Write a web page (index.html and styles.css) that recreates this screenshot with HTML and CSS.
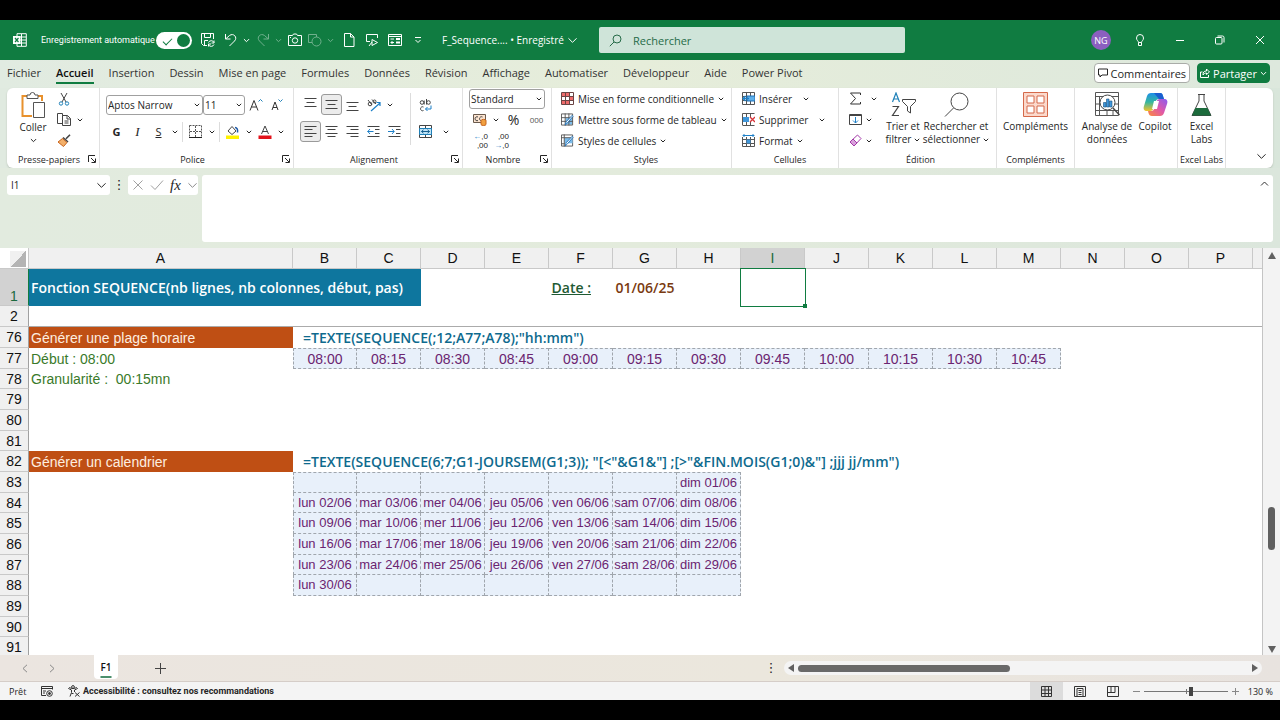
FILE: index.html
```
<!DOCTYPE html>
<html lang="fr">
<head>
  <meta charset="utf-8">
  <title>F_Sequence - Excel</title>
  <link rel="stylesheet" href="styles.css">
</head>
<body>
  <!-- Shared icons -->
  <svg class="defs" width="0" height="0">
    <symbol id="chev" viewBox="0 0 6 6"><path d="M.8 1.8 3 4l2.2-2.2" fill="none" stroke="currentColor" vector-effect="non-scaling-stroke"/></symbol>
    <symbol id="launch" viewBox="0 0 8 8"><path d="M.5 7V.5H7M3 3l4 4M7.500 3.500v4h-4" fill="none" stroke="currentColor"/></symbol>
  </svg>

  <header class="titlebar">
    <div class="quick-access">
      <svg class="logo" width="14" height="14" viewBox="0 0 14 14" fill="none" stroke="#fff"><path d="M4 3V.7h9.300v12.600H4V11M8.500 1v12M7 4h6M7 7h6M7 10h6"/><path d="M0 3h7.500v8H0z" fill="#fff" stroke="none"/><path d="m2 5 3.500 4M5.500 5 2 9" stroke="#107c41" stroke-width="1.200"/></svg>
      <label class="autosave" for="autosave">Enregistrement automatique</label>
      <input type="checkbox" id="autosave" class="toggle" checked>
      <button class="tool save" aria-label="Enregistrer"><svg width="14" height="14" viewBox="0 0 14 14"><path d="M6 12.500H2.500l-2-2V.5h12V6M3.500.5v4h6v-4M3.500 12V7.500H7M13 7.500v2.500h-2.500M7.500 13.500V11H10M7.500 9.500a3 3 0 0 1 5.500 0M13 11.500a3 3 0 0 1-5.300.5"/></svg></button>
      <button class="tool undo" aria-label="Annuler"><svg width="14" height="14" viewBox="0 0 14 14"><path d="M1.500 1v5h5M1.800 5.800 5.500 2.500c4-3 8.500 2 5 5.500L5.500 13"/></svg></button>
      <button class="drop" aria-label="Liste annuler"><svg width="7" height="7"><use href="#chev"/></svg></button>
      <button class="tool dim redo" aria-label="Rétablir"><svg width="14" height="14" viewBox="0 0 14 14"><path d="M12.500 1v5h-5M12.200 5.800 8.500 2.500c-4-3-8.500 2-5 5.500L8.500 13"/></svg></button>
      <button class="drop dim" aria-label="Liste rétablir"><svg width="7" height="7"><use href="#chev"/></svg></button>
      <button class="tool camera" aria-label="Appareil photo"><svg width="14" height="14" viewBox="0 0 14 14"><path d="M.5 2.500h4l1-1.500h3l1 1.500h4v10H.5z"/><circle cx="7" cy="7.500" r="2.700"/><path d="M2 4.500h1"/></svg></button>
      <button class="tool dim shapes" aria-label="Formes"><svg width="14" height="14" viewBox="0 0 14 14"><path d="M4 9.500H.5v-8h8V4"/><circle cx="8.500" cy="8.500" r="4.500"/></svg></button>
      <button class="drop dim" aria-label="Liste formes"><svg width="7" height="7"><use href="#chev"/></svg></button>
      <button class="tool doc" aria-label="Nouveau"><svg width="14" height="14" viewBox="0 0 14 14"><path d="M2.500.5h6l3.500 3.500v9.500H2.500zM8.500.5V4H12"/></svg></button>
      <button class="tool present" aria-label="Présenter"><svg width="14" height="14" viewBox="0 0 14 14"><path d="M5 8.500H1.500v-7h11V5M4 13l3-4M7 6.500v6l5.500-3z"/></svg></button>
      <button class="tool form" aria-label="Formulaire"><svg width="14" height="14" viewBox="0 0 14 14"><path d="M.5 1.500h13v11H.5zM.5 3.500h13M2.500 6h3.500M2.500 9.500h3.500M8 6h4M8 9.500h4" /><path d="M8 6h4M8 9.500h4M3 9.500h2" stroke-width="2"/></svg></button>
      <button class="drop more" aria-label="Personnaliser"><svg width="8" height="8" viewBox="0 0 8 8" fill="none" stroke="currentColor"><path d="M1 1.500h6M1.500 4 4 6.500 6.500 4"/></svg></button>
      <button class="filename">F_Sequence.... • Enregistré <svg width="11" height="11"><use href="#chev"/></svg></button>
    </div>
    <div class="search">
      <svg width="13" height="13" viewBox="0 0 13 13" fill="none" stroke="#266b48"><circle cx="8" cy="5" r="4"/><path d="M5 8 .8 12.200"/></svg>
      <input type="search" aria-label="Rechercher" placeholder="Rechercher">
    </div>
    <div class="window-tools">
      <button class="avatar">NG</button>
      <button class="win" aria-label="Conseils"><svg width="12" height="12" viewBox="0 0 12 12"><path d="M4.500 8.500C4.500 7 2.500 6.500 2.500 4a3.500 3.500 0 0 1 7 0c0 2.500-2 3-2 4.500zM4.500 8.500v3h3v-3"/></svg></button>
      <button class="win" aria-label="Réduire"><svg width="10" height="10" viewBox="0 0 10 10"><path d="M1 5.500h8"/></svg></button>
      <button class="win" aria-label="Restaurer"><svg width="10" height="10" viewBox="0 0 10 10"><rect x=".5" y="2.500" width="6.500" height="6.500" rx="1"/><path d="M2.500 1h5a1.500 1.500 0 0 1 1.500 1.500v5"/></svg></button>
      <button class="win" aria-label="Fermer"><svg width="10" height="10" viewBox="0 0 10 10"><path d="m1 1 8 8M9 1 1 9"/></svg></button>
    </div>
  </header>

  <nav class="menu">
    <a href="#">Fichier</a>
    <a href="#" class="active">Accueil</a>
    <a href="#">Insertion</a>
    <a href="#">Dessin</a>
    <a href="#">Mise en page</a>
    <a href="#">Formules</a>
    <a href="#">Données</a>
    <a href="#">Révision</a>
    <a href="#">Affichage</a>
    <a href="#">Automatiser</a>
    <a href="#">Développeur</a>
    <a href="#">Aide</a>
    <a href="#">Power Pivot</a>
    <div class="menu-actions">
      <button class="comments"><svg width="10" height="10" viewBox="0 0 10 10" fill="none" stroke="currentColor"><path d="M.5 1h9v6H4L2 9V7H.5z"/></svg>Commentaires</button>
      <button class="share"><svg width="10" height="10" viewBox="0 0 10 10" fill="none" stroke="currentColor"><path d="M2.500 4H.5v5.500h8V7M3 7c0-3 1-4 3.500-4V1l3 3-3 2.500V5C5 5 4 5.500 3 7z"/></svg>Partager<svg width="7" height="7"><use href="#chev"/></svg></button>
    </div>
  </nav>

  <div class="ribbon-area">
  <section class="ribbon">
    <div class="group g-clipboard">
      <div class="group-body">
        <button class="big paste"><svg width="24" height="26" viewBox="0 0 24 26" fill="none"><path d="M6 4H1.500v20H11M17 4h4v5" stroke="#e8912d" stroke-width="2"/><path d="M6 6.500V3h3a2.500 2.500 0 0 1 5 0h3v3.500z" fill="#fff" stroke="#555"/><path d="M12.500 10.500h11v15h-11z" fill="#fff" stroke="#555"/></svg>Coller<svg width="7" height="7"><use href="#chev"/></svg></button>
        <div class="stack">
          <div class="row"><button class="ico" aria-label="Couper"><svg width="12" height="14" viewBox="0 0 12 14" fill="none"><path d="m3 1 5 9M9 1 4 10" stroke="#444"/><circle cx="3" cy="11.500" r="1.700" stroke="#1e80b8"/><circle cx="9" cy="11.500" r="1.700" stroke="#1e80b8"/></svg></button></div>
          <div class="row"><button class="ico" aria-label="Copier"><svg width="14" height="13" viewBox="0 0 14 13" fill="#fff" stroke="#444"><path d="M.5.5h5v10h-5z"/><path d="M5.500 2.500h5l3 3v7h-8zM10 2.500v3.500h3.500M7.500 8h4M7.500 10h4"/></svg></button><button class="chev-btn" aria-label="Options copier"><svg width="6" height="6"><use href="#chev"/></svg></button></div>
          <div class="row"><button class="ico" aria-label="Reproduire la mise en forme"><svg width="14" height="13" viewBox="0 0 14 13"><path d="m13 .8-4 4M6 3.500l5 4.500" fill="none" stroke="#444" stroke-width="1.600"/><path d="M5.500 4.500 10 8.500 6.500 12.500 1 8z" fill="#f3b06a" stroke="#c8641c"/></svg></button></div>
        </div>
      </div>
      <div class="group-foot"><span>Presse-papiers</span><button class="launcher" aria-label="Options presse-papiers"><svg width="8" height="8"><use href="#launch"/></svg></button></div>
    </div>

    <div class="group g-font">
      <div class="group-body two-rows">
        <div class="row">
          <div class="combo font-name"><select aria-label="Police"><option>Aptos Narrow</option></select><svg width="6" height="6"><use href="#chev"/></svg></div>
          <div class="combo font-size"><select aria-label="Taille"><option>11</option></select><svg width="6" height="6"><use href="#chev"/></svg></div>
          <button class="ico" aria-label="Agrandir"><svg width="14" height="14" viewBox="0 0 14 14" fill="none"><path d="m1 12.500 4-10 4 10M2.500 9h5" stroke="#333"/><path d="m9.500 3.500 2-2 2 2" stroke="#1e80b8"/></svg></button>
          <button class="ico" aria-label="Réduire la police"><svg width="14" height="14" viewBox="0 0 14 14" fill="none"><path d="m2 12 3-8 3 8M3 9.500h4" stroke="#333"/><path d="m8.500 1.500 2 2 2-2" stroke="#1e80b8"/></svg></button>
        </div>
        <div class="row">
          <button class="ico bold">G</button><button class="ico italic">I</button><button class="ico underline">S</button><button class="chev-btn" aria-label="Soulignement"><svg width="6" height="6"><use href="#chev"/></svg></button>
          <span class="sep"></span>
          <button class="ico" aria-label="Bordures"><svg width="13" height="13" viewBox="0 0 13 13" fill="none" stroke="#555"><path d="M.5 .5h12v12M.5.5v12M6.500 1v11M1 6.500h11" stroke-dasharray="2 1"/><path d="M0 12.500h13" stroke="#222"/></svg></button><button class="chev-btn" aria-label="Options bordures"><svg width="6" height="6"><use href="#chev"/></svg></button>
          <span class="sep"></span>
          <button class="ico" aria-label="Remplissage"><svg width="14" height="14" viewBox="0 0 14 14"><path d="m6 1.500 4 4.500-4 3.500L2 6z" fill="#fff" stroke="#444"/><path d="M9 2.500c2 0 3 2 2.500 5" fill="none" stroke="#1e5aa8" stroke-width="1.500"/><path d="M0 10.500h13V14H0z" fill="#fff200"/></svg></button><button class="chev-btn" aria-label="Couleurs de remplissage"><svg width="6" height="6"><use href="#chev"/></svg></button>
          <button class="ico" aria-label="Couleur de police"><svg width="14" height="14" viewBox="0 0 14 14"><path d="m3.500 9 3.500-8 3.500 8M4.500 6.500h5" fill="none" stroke="#444"/><path d="M.5 10.500h13V14H.5z" fill="#e3131b"/></svg></button><button class="chev-btn" aria-label="Couleurs de police"><svg width="6" height="6"><use href="#chev"/></svg></button>
        </div>
      </div>
      <div class="group-foot"><span>Police</span><button class="launcher" aria-label="Options police"><svg width="8" height="8"><use href="#launch"/></svg></button></div>
    </div>

    <div class="group g-align">
      <div class="group-body">
        <div class="two-rows align-main">
          <div class="row">
            <button class="ico" aria-label="Haut"><svg width="13" height="13" viewBox="0 0 13 13" stroke="#444"><path d="M.5 .5h12M2.500 4.500h8M.5 8.500h12"/></svg></button>
            <button class="ico on" aria-label="Centré"><svg width="13" height="13" viewBox="0 0 13 13" stroke="#444"><path d="M.5 2.500h12M2.500 6.500h8M.5 10.500h12"/></svg></button>
            <button class="ico" aria-label="Bas"><svg width="13" height="13" viewBox="0 0 13 13" stroke="#444"><path d="M.5 4.500h12M2.500 8.500h8M.5 12.500h12"/></svg></button>
            <button class="ico" aria-label="Orientation"><svg width="14" height="14" viewBox="0 0 14 14" fill="none"><circle cx="3" cy="6" r="1.800" stroke="#444"/><path d="m1 2 4 5M5 1.500l4 4.500" stroke="#444"/><circle cx="7.500" cy="3.500" r="1.500" stroke="#444"/><path d="m4 13 9-8M9.500 4.500H13V8" stroke="#1e80c8" stroke-width="1.200"/></svg></button>
            <button class="chev-btn" aria-label="Options orientation"><svg width="6" height="6"><use href="#chev"/></svg></button>
          </div>
          <div class="row">
            <button class="ico on" aria-label="Gauche"><svg width="13" height="13" viewBox="0 0 13 13" stroke="#444"><path d="M.5 1.500h12M.5 4.500h8M.5 8.500h12M.5 11.500h8"/></svg></button>
            <button class="ico" aria-label="Centrer"><svg width="13" height="13" viewBox="0 0 13 13" stroke="#444"><path d="M.5 1.500h12M2.500 4.500h8M.5 8.500h12M2.500 11.500h8"/></svg></button>
            <button class="ico" aria-label="Droite"><svg width="13" height="13" viewBox="0 0 13 13" stroke="#444"><path d="M.5 1.500h12M4.500 4.500h8M.5 8.500h12M4.500 11.500h8"/></svg></button>
            <button class="ico" aria-label="Diminuer le retrait"><svg width="13" height="13" viewBox="0 0 13 13" fill="none" stroke="#444"><path d="M.5 1.500h12M8 4.500h4.500M8 8.500h4.500M.5 11.500h12"/><path d="M6.500 6.500h-6M3 4 .8 6.500 3 9" stroke="#1e80c8"/></svg></button>
            <button class="ico" aria-label="Augmenter le retrait"><svg width="13" height="13" viewBox="0 0 13 13" fill="none" stroke="#444"><path d="M.5 1.500h12M8 4.500h4.500M8 8.500h4.500M.5 11.500h12"/><path d="M0 6.500h6M4 4l2.200 2.500L4 9" stroke="#1e80c8"/></svg></button>
          </div>
        </div>
        <span class="sep tall"></span>
        <div class="two-rows">
          <div class="row"><button class="ico wrap" aria-label="Renvoyer à la ligne"><svg width="13" height="14" viewBox="0 0 13 14" fill="none" stroke="#444"><circle cx="3" cy="4.500" r="1.800"/><path d="M5.200 2.500V6.500M7.500 1v5.500M4.500 9a2 2 0 1 0 0 3.500"/><circle cx="9.500" cy="4.500" r="1.800"/><path d="M12 7.500V11H6.500M8.500 9l-2 2 2 2" stroke="#1e80c8"/></svg></button></div>
          <div class="row"><button class="ico" aria-label="Fusionner"><svg width="13" height="13" viewBox="0 0 13 13" fill="none"><path d="M.5.5h12v12H.5zM6.500 0v3M6.500 10v3" stroke="#444"/><path d="M.5 3.500h12v6H.5z" fill="#bfe2f5" stroke="#1e80b8"/><path d="M2.500 6.500h8M4.500 4.800l-2 1.700 2 1.700M8.500 4.800l2 1.700-2 1.700" stroke="#17608f"/></svg></button><button class="chev-btn merge-drop" aria-label="Options fusion"><svg width="6" height="6"><use href="#chev"/></svg></button></div>
        </div>
      </div>
      <div class="group-foot"><span>Alignement</span><button class="launcher" aria-label="Options alignement"><svg width="8" height="8"><use href="#launch"/></svg></button></div>
    </div>

    <div class="group g-number">
      <div class="group-body stack">
        <div class="row"><div class="combo number-format"><select aria-label="Format de nombre"><option>Standard</option></select><svg width="6" height="6"><use href="#chev"/></svg></div></div>
        <div class="row"><button class="ico" aria-label="Monétaire"><svg width="14" height="12" viewBox="0 0 14 12" fill="none"><path d="M.5.5h12v8H.5z" fill="#fbe3cf" stroke="#6b5a4d"/><path d="M5 3a2 2 0 1 0 0 3.500M9.500 3a2 2 0 1 0 0 3.500" stroke="#444"/><path d="M8 6.500c0-1.500 5-1.500 5 0v4c0 1.300-5 1.300-5 0z" fill="#f0a040" stroke="#c8641c"/></svg></button><button class="chev-btn" aria-label="Options monétaire"><svg width="6" height="6"><use href="#chev"/></svg></button><button class="ico percent">%</button><button class="ico thousands">000</button></div>
        <div class="row"><button class="ico decimals"><span class="less">,0</span><span>,00</span></button><button class="ico decimals"><span>,00</span><span class="more-dec">,0</span></button></div>
      </div>
      <div class="group-foot"><span>Nombre</span><button class="launcher" aria-label="Options nombre"><svg width="8" height="8"><use href="#launch"/></svg></button></div>
    </div>

    <div class="group g-styles">
      <div class="group-body stack">
        <button class="cmd"><svg width="13" height="13" viewBox="0 0 13 13"><path d="M.5.5h12v12H.5z" fill="#fff"/><path d="M1 1h4v3H1zM1 8h7v4H1zM8 4h4v5H8zM5 1h4v3H5z" fill="#ee6b6b"/><path d="M.5.5h12v12H.5zM4.500 0v13M8.500 0v13M0 4.500h13M0 8.500h13" fill="none" stroke="#6a4444"/></svg>Mise en forme conditionnelle<svg width="6" height="6"><use href="#chev"/></svg></button>
        <button class="cmd"><svg width="13" height="13" viewBox="0 0 14 13"><path d="M.5.5h12v12H.5z" fill="#fff"/><path d="M5 5h7v7H5z" fill="#7dbdec"/><path d="M.5.5h12v12H.5zM4.500 0v13M8.500 0v13M0 4.500h13M0 8.500h13" fill="none" stroke="#555"/><path d="M13 3 7 10l-2.500 2.500 1-3.500L12 2z" fill="#fff" stroke="#1e70b8"/></svg>Mettre sous forme de tableau<svg width="6" height="6"><use href="#chev"/></svg></button>
        <button class="cmd"><svg width="13" height="13" viewBox="0 0 14 13"><path d="M.5.5h12v12H.5z" fill="#fff" stroke="#555"/><path d="M3.500 3.500h9v6h-9z" fill="#7dbdec"/><path d="M3.500 0v13M0 3.500h13M0 10h4" fill="none" stroke="#555"/><path d="M13 3 7 10l-2.500 2.500 1-3.500L12 2z" fill="#fff" stroke="#1e70b8"/></svg>Styles de cellules<svg width="6" height="6"><use href="#chev"/></svg></button>
      </div>
      <div class="group-foot"><span>Styles</span></div>
    </div>

    <div class="group g-cells">
      <div class="group-body stack">
        <button class="cmd"><svg width="13" height="13" viewBox="0 0 13 13" fill="none"><path d="M.5.5h12v12H.5zM4.500 0v13M8.500 0v13M0 4.500h13M0 8.500h13" stroke="#555"/><path d="M5 4h8v5H5z" fill="#5fb0ea" stroke="#1e70b8"/><path d="M7 6.500H.8M3.500 4 1 6.500 3.500 9" stroke="#1e80c8" stroke-width="1.300"/></svg>Insérer<svg class="far" width="6" height="6"><use href="#chev"/></svg></button>
        <button class="cmd"><svg width="13" height="13" viewBox="0 0 13 13" fill="none"><path d="M.5 12V.5h12M.5 12.500h12M4.500 0v4M8.500 0v4M4.500 9v4M8.500 9v4" stroke="#555"/><path d="M1 4h6v5H1z" fill="#3f97db"/><path d="m8 4 5 5M13 4 8 9" stroke="#d8353a" stroke-width="1.300"/></svg>Supprimer<svg class="far" width="6" height="6"><use href="#chev"/></svg></button>
        <button class="cmd"><svg width="13" height="13" viewBox="0 0 13 13" fill="none"><path d="M.5 3v9.500h12V3M4.500 3v10M8.500 3v10M0 5.500h13M0 9.500h13" stroke="#555"/><path d="M4.500 5.500h4v4h-4z" fill="#3f97db"/><path d="M1 1.500h11M2.500 0 1 1.500 2.500 3M10.500 0 12 1.500 10.500 3" stroke="#1e80c8"/></svg>Format<svg width="6" height="6"><use href="#chev"/></svg></button>
      </div>
      <div class="group-foot"><span>Cellules</span></div>
    </div>

    <div class="group g-edit">
      <div class="group-body">
        <div class="stack">
          <button class="cmd sum" aria-label="Somme"><svg width="13" height="13" viewBox="0 0 13 13" fill="none" stroke="#333"><path d="M11.500 3V1h-10l5 5.500-5 5.500h10v-2"/></svg><svg width="6" height="6"><use href="#chev"/></svg></button>
          <button class="cmd" aria-label="Recopier"><svg width="13" height="13" viewBox="0 0 13 13" fill="none"><path d="M.5 1.500h12v10H.5z" stroke="#444"/><path d="M.5 2.500h12" stroke="#444"/><path d="M6.500 4v6M4 7.500 6.500 10 9 7.500" stroke="#1e80c8"/></svg><svg width="6" height="6"><use href="#chev"/></svg></button>
          <button class="cmd" aria-label="Effacer"><svg width="13" height="13" viewBox="0 0 13 13"><path d="M8.500 1 12 4.500 5 12 1 8z" fill="#fff" stroke="#a33aa8"/><path d="m4 5-3 3 4 4 3-3z" fill="#d9a0dc" stroke="#a33aa8"/></svg><svg width="6" height="6"><use href="#chev"/></svg></button>
        </div>
        <button class="big sort"><svg width="25" height="25" viewBox="0 0 25 25" fill="none"><path d="m1.500 10 3.500-9 3.500 9M2.700 7h4.600" stroke="#1e80b8" stroke-width="1.200"/><path d="M1.500 14.500h6l-6 9h6.500" stroke="#444" stroke-width="1.200"/><path d="M11.500 7.500h13v2l-5 5v6.500l-3-2v-4.500l-5-5z" stroke="#444"/></svg>Trier et<span>filtrer <svg width="6" height="6"><use href="#chev"/></svg></span></button>
        <button class="big find"><svg width="25" height="25" viewBox="0 0 25 25" fill="none" stroke="#444"><circle cx="15.500" cy="9.500" r="8.500"/><path d="M9.500 16 1 24.500"/></svg>Rechercher et<span>sélectionner <svg width="6" height="6"><use href="#chev"/></svg></span></button>
      </div>
      <div class="group-foot"><span>Édition</span></div>
    </div>

    <div class="group g-addins">
      <div class="group-body">
        <button class="big"><svg width="25" height="25" viewBox="0 0 25 25"><path d="M.5.5h24v24H.5z" fill="#fbd9cc" stroke="#d4694a"/><path d="M4 4h7v7H4zM14 4h7v7h-7zM4 14h7v7H4zM14 14h7v7h-7z" fill="#fff" stroke="#d4694a"/></svg>Compléments</button>
      </div>
      <div class="group-foot"><span>Compléments</span></div>
    </div>

    <div class="group g-analysis">
      <div class="group-body">
        <button class="big analyse"><svg width="25" height="25" viewBox="0 0 25 25" fill="none"><path d="M.5.5h23v23H.5zM.5 4.500h23M.5 12h23M.5 18.500h23M4.500 4v20M12 18v6M18 18v6" stroke="#555"/><circle cx="12.500" cy="10.500" r="7.500" fill="#fff" stroke="#444"/><path d="M8.500 10.500h2.500v4.500H8.500zM11.500 7h2.500v8h-2.500zM14.500 9H17v6h-2.500z" fill="#3f97db" stroke="#17507f" stroke-width=".6"/><path d="m18 16 6.500 7" stroke="#444" stroke-width="1.500"/></svg>Analyse de<span>données</span></button>
        <button class="big copilot"><svg width="25" height="25" viewBox="0 0 25 25"><defs><linearGradient id="cp1" x1="0" y1="0" x2="0" y2="1"><stop offset="0" stop-color="#1f8fe8"/><stop offset=".5" stop-color="#35b6a0"/><stop offset="1" stop-color="#f4c22b"/></linearGradient><linearGradient id="cp2" x1="1" y1="0" x2="0" y2="1"><stop offset="0" stop-color="#8a5cf0"/><stop offset=".5" stop-color="#e058a8"/><stop offset="1" stop-color="#fb8a3c"/></linearGradient></defs><path d="M8 1h9c2 0 2.500 1 3 3l1 3h-5c-2 0-3 1-3.500 3l-2 6c-.5 2-1.500 3-3.500 3H4c-3 0-4-2-3-5L4 4c.7-2 2-3 4-3z" fill="url(#cp1)"/><path d="M17 24H9c-2 0-3-1-3.500-3L5 19h3c2 0 3-1 3.500-3l2-6c.5-2 1.500-3 3.500-3h4c3 0 4 2 3 5l-3 9c-.7 2-2 3-4 3z" fill="url(#cp2)"/><path d="M11 9h5l-2 8H9z" fill="#fff"/><path d="M11 1h6c2 0 2.500 1 3 3l1 3h-5z" fill="#1b5fd0"/></svg>Copilot</button>
      </div>
      <div class="group-foot"></div>
    </div>

    <div class="group g-labs">
      <div class="group-body">
        <button class="big"><svg width="21" height="25" viewBox="0 0 21 25"><path d="M7 2.500h7M8 3v6L1 23.500h19L13 9V3" fill="#fff" stroke="#444"/><path d="M4.500 16h12l3.500 7.500H1z" fill="#1c6b3c"/></svg>Excel<span>Labs</span></button>
      </div>
      <div class="group-foot"><span>Excel Labs</span></div>
    </div>
    <button class="collapse" aria-label="Réduire le ruban"><svg width="11" height="11"><use href="#chev"/></svg></button>
  </section>
  </div>

  <section class="formula-bar">
    <div class="combo name-box"><input type="text" aria-label="Zone de nom" value="I1"><svg width="11" height="11"><use href="#chev"/></svg></div>
    <span class="dots">⋮</span>
    <div class="fx-box">
      <button aria-label="Annuler la saisie"><svg width="12" height="12" viewBox="0 0 12 12" fill="none" stroke="#a0a0a0"><path d="m1.500 1.500 9 9M10.500 1.500l-9 9"/></svg></button>
      <button aria-label="Valider"><svg width="14" height="12" viewBox="0 0 14 12" fill="none" stroke="#a0a0a0"><path d="M1 6.500 5 10.500 13 1.500"/></svg></button>
      <button class="fx">fx</button>
      <button class="muted" aria-label="Fonctions"><svg width="11" height="11"><use href="#chev"/></svg></button>
    </div>
    <div class="formula-input">
      <textarea aria-label="Barre de formule"></textarea>
      <svg width="9" height="9" viewBox="0 0 9 9" fill="none" stroke="#333"><path d="M1 6.500 4.500 3 8 6.500"/></svg>
    </div>
  </section>

  <main class="sheet">
    <div class="grid-view">
      <table class="grid">
        <colgroup><col class="col-num"><col class="col-a"><col span="16" class="col-std"></colgroup>
        <thead>
          <tr><th class="corner"></th><th>A</th><th>B</th><th>C</th><th>D</th><th>E</th><th>F</th><th>G</th><th>H</th><th class="selected">I</th><th>J</th><th>K</th><th>L</th><th>M</th><th>N</th><th>O</th><th>P</th><th></th></tr>
        </thead>
        <tbody class="frozen">
          <tr class="title-row"><th class="selected">1</th><td colspan="3" class="title">Fonction SEQUENCE(nb lignes, nb colonnes, début, pas)</td><td colspan="2"></td><td class="date-label">Date :</td><td class="date">01/06/25</td><td></td><td class="current"><span class="cursor"></span></td><td colspan="8"></td></tr>
          <tr><th>2</th><td colspan="17"></td></tr>
        </tbody>
        <tbody class="scrolled">
          <tr><th>76</th><td class="section">Générer une plage horaire</td><td colspan="16" class="formula">=TEXTE(SEQUENCE(;12;A77;A78);"hh:mm")</td></tr>
          <tr class="range first"><th>77</th><td class="param">Début : 08:00</td><td>08:00</td><td>08:15</td><td>08:30</td><td>08:45</td><td>09:00</td><td>09:15</td><td>09:30</td><td>09:45</td><td>10:00</td><td>10:15</td><td>10:30</td><td>10:45</td><td colspan="4" class="blank"></td></tr>
          <tr><th>78</th><td class="param">Granularité :&nbsp; 00:15mn</td><td colspan="16"></td></tr>
          <tr><th>79</th><td colspan="17"></td></tr>
          <tr><th>80</th><td colspan="17"></td></tr>
          <tr><th>81</th><td colspan="17"></td></tr>
          <tr><th>82</th><td class="section">Générer un calendrier</td><td colspan="16" class="formula">=TEXTE(SEQUENCE(6;7;G1-JOURSEM(G1;3)); "[&lt;"&amp;G1&amp;"] ;[&gt;"&amp;FIN.MOIS(G1;0)&amp;"] ;jjj jj/mm")</td></tr>
          <tr class="range days first"><th>83</th><td class="blank"></td><td></td><td></td><td></td><td></td><td></td><td></td><td>dim 01/06</td><td colspan="9" class="blank"></td></tr>
          <tr class="range days"><th>84</th><td class="blank"></td><td>lun 02/06</td><td>mar 03/06</td><td>mer 04/06</td><td>jeu 05/06</td><td>ven 06/06</td><td>sam 07/06</td><td>dim 08/06</td><td colspan="9" class="blank"></td></tr>
          <tr class="range days"><th>85</th><td class="blank"></td><td>lun 09/06</td><td>mar 10/06</td><td>mer 11/06</td><td>jeu 12/06</td><td>ven 13/06</td><td>sam 14/06</td><td>dim 15/06</td><td colspan="9" class="blank"></td></tr>
          <tr class="range days"><th>86</th><td class="blank"></td><td>lun 16/06</td><td>mar 17/06</td><td>mer 18/06</td><td>jeu 19/06</td><td>ven 20/06</td><td>sam 21/06</td><td>dim 22/06</td><td colspan="9" class="blank"></td></tr>
          <tr class="range days"><th>87</th><td class="blank"></td><td>lun 23/06</td><td>mar 24/06</td><td>mer 25/06</td><td>jeu 26/06</td><td>ven 27/06</td><td>sam 28/06</td><td>dim 29/06</td><td colspan="9" class="blank"></td></tr>
          <tr class="range days"><th>88</th><td class="blank"></td><td>lun 30/06</td><td></td><td></td><td></td><td></td><td></td><td></td><td colspan="9" class="blank"></td></tr>
          <tr><th>89</th><td colspan="17"></td></tr>
          <tr><th>90</th><td colspan="17"></td></tr>
          <tr><th>91</th><td colspan="17"></td></tr>
        </tbody>
      </table>
    </div>
    <div class="vscroll">
      <svg width="8" height="7" viewBox="0 0 8 7"><path d="M4 0 8 7H0z" fill="#606060"/></svg>
      <span class="space-before"></span><span class="thumb"></span><span class="space-after"></span>
      <svg width="8" height="7" viewBox="0 0 8 7"><path d="M4 7 8 0H0z" fill="#606060"/></svg>
    </div>
  </main>

  <nav class="sheet-tabs">
    <button class="nav-arrow" aria-label="Précédent"><svg width="6" height="9" viewBox="0 0 6 9" fill="none" stroke="#888"><path d="M5 .8 1 4.500l4 3.700"/></svg></button>
    <button class="nav-arrow" aria-label="Suivant"><svg width="6" height="9" viewBox="0 0 6 9" fill="none" stroke="#888"><path d="m1 .8 4 3.700-4 3.700"/></svg></button>
    <button class="sheet-tab">F1</button>
    <button class="add-sheet" aria-label="Nouvelle feuille"><svg width="11" height="11" viewBox="0 0 11 11" stroke="#444"><path d="M5.500 0v11M0 5.500h11"/></svg></button>
    <span class="dots">⋮</span>
    <div class="hscroll">
      <svg width="6" height="8" viewBox="0 0 6 8"><path d="M6 0v8L0 4z" fill="#606060"/></svg>
      <span class="track"><span class="thumb"></span></span>
      <svg width="6" height="8" viewBox="0 0 6 8"><path d="M0 0v8l6-4z" fill="#606060"/></svg>
    </div>
  </nav>

  <footer class="status">
    <span class="ready">Prêt</span>
    <svg width="12" height="11" viewBox="0 0 12 11" fill="none" stroke="#333"><path d="M5 9.500H.5v-9h11v3M.5 2.500h11M2 5h3M2 7h2"/><circle cx="8.500" cy="7.500" r="2.800"/><circle cx="8.500" cy="7.500" r="1" fill="#333"/></svg>
    <button class="access"><svg width="12" height="12" viewBox="0 0 12 12" fill="none" stroke="#333"><circle cx="5" cy="2" r="1.400"/><path d="M.5 3.500 3.500 5v2.500L2 11.500M9.500 3.500 6.500 5v2M3.500 8.500h2M7 7.500l4.500 4M11.500 7.500l-4.500 4M.5 3.500l1-1 2 1h3l2-1 1 1"/></svg>Accessibilité : consultez nos recommandations</button>
    <div class="views">
      <button class="view on" aria-label="Normal"><svg width="11" height="11" viewBox="0 0 11 11" fill="none" stroke="#333"><path d="M.5.5h10v10H.5zM4 0v11M7.500 0v11M0 4h11M0 7.500h11"/></svg></button>
      <button class="view" aria-label="Mise en page"><svg width="12" height="11" viewBox="0 0 12 11" fill="none" stroke="#333"><path d="M.5.5h11v10H.5zM3 2.500h6v8H3zM4.500 4.500h3M4.500 6.500h3M4.500 8.500h3"/></svg></button>
      <button class="view" aria-label="Sauts de page"><svg width="12" height="11" viewBox="0 0 12 11" fill="none" stroke="#333"><path d="M.5.5h11v10H.5zM.5 6.500h7.500v-6M4 .5v6"/></svg></button>
      <button class="zoom-step" aria-label="Zoom arrière"><svg width="7" height="7" viewBox="0 0 7 7" stroke="#888"><path d="M0 3.500h7"/></svg></button>
      <input type="range" class="zoom" aria-label="Zoom" min="0" max="100" value="56">
      <button class="zoom-step" aria-label="Zoom avant"><svg width="7" height="7" viewBox="0 0 7 7" stroke="#888"><path d="M0 3.500h7M3.500 0v7"/></svg></button>
      <span class="zoom-value">130 %</span>
    </div>
  </footer>
</body>
</html>
```

FILE: styles.css
```
* {
  box-sizing: border-box;
}
body {
  margin: 0;
  padding: 20px 0;
  height: 100vh;
  display: flex;
  flex-direction: column;
  background-color: #000;
  font-family: "Open Sans", "Noto Sans", sans-serif;
  font-size: 11px;
  color: #262626;
  overflow: hidden;
}
button, input, select, textarea {
  font: inherit;
  color: inherit;
  margin: 0;
  padding: 0;
  border: none;
  background: none;
}
button {
  display: flex;
  align-items: center;
  justify-content: center;
  white-space: nowrap;
}
svg {
  flex: none;
  display: block;
}
.defs {
  position: absolute;
}

/* Title bar */
.titlebar {
  display: flex;
  align-items: center;
  flex: none;
  height: 40px;
  background-color: #107c41;
  color: #fff;
}
.quick-access {
  display: flex;
  align-items: center;
  width: 599px;
  padding-left: 13px;
}
.autosave {
  width: 116px;
  padding-left: 1px;
  margin-left: 13px;
  font-family: Roboto, sans-serif;
  font-size: 9px;
  white-space: nowrap;
}
.toggle {
  appearance: none;
  display: flex;
  align-items: center;
  justify-content: flex-end;
  width: 36px;
  height: 17px;
  padding: 0 2px 0 7px;
  border-radius: 9px;
  background-color: #fff;
}
.toggle::before {
  content: "";
  width: 8px;
  height: 4px;
  margin-right: auto;
  border-left: 1px solid #107c41;
  border-bottom: 1px solid #107c41;
  transform: rotate(-45deg);
}
.toggle::after {
  content: "";
  width: 13px;
  height: 13px;
  border-radius: 50%;
  background-color: #107c41;
}
.tool {
  width: 20px;
  height: 20px;
}
.tool svg, .win svg {
  fill: none;
  stroke: #fff;
}
.save {
  margin-left: 6px;
  margin-right: 3px;
}
.drop {
  width: 10px;
  height: 20px;
  margin-right: 2px;
}
.dim {
  opacity: 0.4;
}
.doc {
  margin-left: 2px;
}
.doc, .present {
  margin-right: 3px;
}
.more {
  margin-left: 8px;
}
.filename {
  margin-left: 17px;
  gap: 3px;
  font-size: 10px;
}
.search {
  display: flex;
  align-items: center;
  gap: 11px;
  width: 306px;
  height: 26px;
  padding: 0 10px;
  border-radius: 2px;
  background-color: #cfe4d9;
}
.search input {
  flex: 1;
  color: #266b48;
  outline: none;
}
.search input::placeholder {
  color: #266b48;
}
.window-tools {
  display: flex;
  align-items: center;
  margin-left: auto;
}
.avatar {
  width: 20px;
  height: 20px;
  margin-right: 9px;
  border-radius: 50%;
  background-color: #8b5fbf;
  font-size: 9px;
}
.win {
  width: 40px;
  height: 40px;
}

/* Ribbon tabs */
.menu {
  display: flex;
  align-items: center;
  flex: none;
  gap: 15px;
  height: 28px;
  padding: 0 10px 2px 7px;
  background: linear-gradient(90deg, #e1ebe1, #e6edda 50%, #dde8dd);
}
.menu a {
  padding: 3px 0 2px;
  border-bottom: 2px solid transparent;
  color: #333;
  line-height: 15px;
  text-decoration: none;
  white-space: nowrap;
}
.menu a.active {
  border-color: #107c41;
  color: #111;
  font-weight: 600;
}
.menu-actions {
  display: flex;
  gap: 7px;
  margin-left: auto;
}
.comments, .share {
  height: 20px;
  gap: 3px;
  padding: 0 3px;
  border: 1px solid #a9aca8;
  border-radius: 4px;
  background-color: #fff;
}
.share {
  padding: 0 2px;
  border-color: #107c41;
  background-color: #107c41;
  color: #fff;
}

/* Ribbon */
.ribbon-area {
  flex: none;
  padding: 0 7px;
  background: linear-gradient(90deg, #e0eae0, #e3ebdc 50%, #d9e6db);
}
.ribbon {
  display: flex;
  height: 80px;
  border-radius: 6px;
  background-color: #fff;
  box-shadow: 0 1px 2px #b9c2b8;
  font-size: 10px;
}
.group {
  display: flex;
  flex-direction: column;
  flex: none;
  padding: 0 0 2px 6px;
  border-right: 1px solid #e1e1e1;
}
.g-clipboard { width: 93px; }
.g-font { width: 194px; }
.g-align { width: 169px; }
.g-number { width: 89px; }
.g-styles { width: 180px; padding-left: 9px; }
.g-cells { width: 107px; padding-left: 10px; }
.g-edit { width: 158px; }
.g-addins { width: 78px; padding-left: 0; }
.g-analysis { width: 103px; }
.g-labs { width: 48px; padding-left: 0; }
.group-body {
  display: flex;
  flex: 1;
}
.stack {
  display: flex;
  flex-direction: column;
}
.two-rows {
  display: flex;
  flex-direction: column;
  gap: 6px;
  padding-top: 6px;
}
.row {
  display: flex;
  align-items: center;
  height: 21px;
}
.group-foot {
  display: flex;
  align-items: center;
  justify-content: center;
  height: 14px;
  font-size: 9px;
  white-space: nowrap;
}
.group-foot span {
  margin: 0 auto;
}
.launcher {
  width: 14px;
  height: 14px;
}
.ico {
  width: 21px;
  height: 21px;
  border-radius: 3px;
}
.ico.on {
  border: 1px solid #9a9a9a;
  background-color: #ececec;
}
.chev-btn {
  width: 11px;
  height: 21px;
}
.merge-drop {
  margin-left: 4px;
}
.sep {
  width: 1px;
  height: 20px;
  margin: 0 2px;
  background-color: #dcdcdc;
}
.sep.tall {
  height: 52px;
  margin: 5px 4px 0 5px;
}
.big {
  flex-direction: column;
  justify-content: flex-start;
  flex: 1;
  padding-top: 4px;
  line-height: 13px;
}
.big > svg:first-child {
  margin-bottom: 3px;
}
.big span {
  display: flex;
  align-items: center;
  gap: 3px;
}
.paste {
  flex: none;
  width: 40px;
}
.paste svg:last-child {
  margin-top: 3px;
}
.sort {
  flex: none;
  width: 40px;
  margin-left: 6px;
}
.find {
  flex: none;
  width: 66px;
}
.analyse {
  flex: none;
  width: 52px;
}
.combo {
  display: grid;
  align-items: center;
  height: 20px;
}
.combo > * {
  grid-area: 1 / 1;
}
.combo svg {
  justify-self: end;
  margin-right: 3px;
  pointer-events: none;
}
.combo select {
  appearance: none;
  width: 100%;
  height: 100%;
  padding-left: 1px;
  border: 1px solid #a0a0a0;
  border-radius: 3px;
  background-color: #fff;
}
.font-name { width: 97px; }
.font-size { width: 42px; }
.number-format { width: 76px; }
.bold {
  font-size: 11px;
  font-weight: bold;
}
.italic {
  font-family: "Liberation Serif", serif;
  font-style: italic;
  font-size: 13px;
}
.underline {
  font-size: 11px;
  text-decoration: underline;
}
.percent {
  width: 25px;
  font-size: 14px;
}
.thousands {
  color: #555;
  font-size: 8px;
}
.decimals {
  flex-direction: column;
  align-items: flex-end;
  padding-right: 2px;
  font-family: "Liberation Sans", Arial, sans-serif;
  font-size: 8px;
  line-height: 9px;
}
.less::before, .more-dec::before {
  content: "←";
  color: #1e80c8;
}
.more-dec::before {
  content: "→";
}
.cmd {
  justify-content: flex-start;
  height: 21px;
  gap: 4px;
}
.far {
  margin-left: 7px;
}
.sum {
  gap: 9px;
}
.g-edit .stack {
  padding-left: 4px;
}
.collapse {
  align-self: flex-end;
  margin-left: auto;
  padding: 6px;
}

/* Formula bar */
.formula-bar {
  display: flex;
  align-items: flex-start;
  flex: none;
  height: 80px;
  padding: 7px 7px 6px;
  background: linear-gradient(90deg, #e2ebdf, #e3ebdc 50%, #dbe6dc);
}
.name-box, .fx-box {
  height: 20px;
  border-radius: 3px;
  background-color: #fff;
}
.name-box {
  width: 103px;
}
.name-box input {
  width: 100%;
  padding-left: 4px;
  font-size: 10px;
}
.dots {
  width: 18px;
  text-align: center;
  font-family: "DejaVu Sans", sans-serif;
  font-size: 13px;
  line-height: 20px;
}
.fx-box {
  display: flex;
  justify-content: space-between;
  width: 70px;
  padding: 0 0 0 4px;
}
.fx {
  font-family: "Liberation Serif", serif;
  font-style: italic;
  font-size: 15px;
}
.muted {
  color: #8a8a8a;
}
.formula-input {
  display: flex;
  flex: 1;
  height: 67px;
  margin-left: 4px;
  padding: 4px;
  border-radius: 3px;
  background-color: #fff;
}
.formula-input textarea {
  flex: 1;
  resize: none;
  outline: none;
}

/* Sheet */
.sheet {
  display: flex;
  flex: 1;
  min-height: 0;
  background-color: #fff;
}
.grid-view {
  flex: 1;
  min-width: 0;
  overflow: hidden;
  border-right: 1px solid #c4c4c4;
}
.grid {
  width: 1317px;
  table-layout: fixed;
  border-collapse: separate;
  border-spacing: 0;
  font-family: "Liberation Sans", Arial, sans-serif;
  font-size: 14px;
  line-height: 18px;
}
.col-num { width: 29px; }
.col-a { width: 264px; }
.col-std { width: 64px; }
.grid th, .grid td {
  height: 21px;
  padding: 0;
  white-space: nowrap;
}
.grid th {
  border-right: 1px solid #c9c9c9;
  border-bottom: 1px solid #c9c9c9;
  background-color: #f0f0f0;
  color: #111;
  font-weight: normal;
}
.grid tbody th {
  border-right-color: #a0a0a0;
}
.grid th.corner {
  padding: 3px 2px 1px 10px;
  background: linear-gradient(135deg, #f0f0f0 50%, #b4b4b4 50%) content-box #f0f0f0;
}
.grid th.selected {
  background-color: #d2d2d2;
  color: #1b6a3e;
}
.grid thead th.selected {
  border-bottom-color: #107c41;
}
.grid tbody th.selected {
  border-right-color: #107c41;
  vertical-align: bottom;
}
.grid .title-row > * {
  height: 37px;
}
.grid .scrolled tr:nth-child(3n) > * {
  height: 20px;
}
.frozen tr:last-child td {
  border-bottom: 1px solid #ababab;
}
/* Bold cells */
.title, .date-label, .date, .formula {
  font-family: "Open Sans", sans-serif;
  font-size: 14px;
  font-weight: 600;
}
.grid .title {
  padding-left: 2px;
  background-color: #0e769e;
  color: #fff;
}
.grid .date-label {
  padding-right: 22px;
  text-align: right;
  color: #1f5a33;
  text-decoration: underline;
}
.date {
  text-align: center;
  color: #7a3a10;
}
.current {
  position: relative;
}
.cursor {
  position: absolute;
  inset: -1px;
  border: 1px solid #107c41;
}
.cursor::after {
  content: "";
  position: absolute;
  right: -2px;
  bottom: -2px;
  width: 4px;
  height: 4px;
  background-color: #107c41;
}
.grid .section {
  padding-left: 2px;
  background-color: #bf4f14;
  color: #fdeee0;
}
.grid .formula {
  padding-left: 10px;
  color: #0e6a8e;
}
.grid .param {
  padding-left: 2px;
  color: #3a7a2a;
}
.range td:not(.blank):not(.param) {
  border-right: 1px dashed #a0a6ad;
  border-bottom: 1px dashed #a0a6ad;
  background-color: #e8f0fa;
  color: #6b2470;
  text-align: center;
}
.range.first td:not(.blank):not(.param) {
  border-top: 1px dashed #a0a6ad;
}
.range td:not(.blank):nth-child(3) {
  border-left: 1px dashed #a0a6ad;
}
.days {
  font-size: 13px;
}
.days th {
  font-size: 14px;
}
.vscroll {
  display: flex;
  flex-direction: column;
  align-items: center;
  width: 17px;
  padding: 4px 0 2px;
  background-color: #f3f3f3;
}
.vscroll .thumb {
  width: 7px;
  height: 43px;
  border-radius: 4px;
  background-color: #606060;
}
.space-before { flex: 244; }
.space-after { flex: 94; }

/* Sheet tabs */
.sheet-tabs {
  display: flex;
  align-items: center;
  flex: none;
  height: 27px;
  padding: 0 18px 0 11px;
  background: linear-gradient(90deg, #ebe5e0, #ebe7dd 60%, #e8e3df);
  border-bottom: 1px solid #d5cdc8;
}
.nav-arrow {
  width: 27px;
  height: 20px;
}
.sheet-tab {
  align-self: flex-start;
  width: 24px;
  height: 24px;
  margin: 0 37px 0 29px;
  border-radius: 0 0 4px 4px;
  background-color: #fff;
  color: #111;
  font-size: 10px;
  font-weight: 600;
  text-decoration: underline 2px #4c8f6c;
  text-underline-offset: 5px;
}
.sheet-tabs .dots {
  margin-left: auto;
}
.hscroll {
  display: flex;
  align-items: center;
  gap: 4px;
  width: 478px;
  height: 14px;
  margin-left: 4px;
  padding: 0 4px;
  border-radius: 7px;
  background-color: #f4f4f4;
}
.track {
  flex: 1;
}
.hscroll .thumb {
  display: block;
  width: 47%;
  height: 7px;
  border-radius: 4px;
  background-color: #696969;
}

/* Status bar */
.status {
  display: flex;
  align-items: center;
  flex: none;
  height: 18px;
  padding: 0 7px 0 9px;
  background-color: #f4f4f4;
  font-size: 9px;
}
.ready {
  width: 32px;
}
.access {
  gap: 3px;
  margin-left: 15px;
  font-family: Roboto, sans-serif;
  font-weight: bold;
}
.views {
  display: flex;
  align-items: center;
  margin-left: auto;
}
.view {
  width: 33px;
  height: 18px;
}
.view.on {
  background-color: #dcdcdc;
}
.zoom-step {
  width: 15px;
}
.zoom {
  appearance: none;
  width: 84px;
  height: 9px;
  background: linear-gradient(#777, #777) center / 100% 1px no-repeat, linear-gradient(#777, #777) center / 1px 5px no-repeat;
}
.zoom::-webkit-slider-thumb {
  appearance: none;
  width: 4px;
  height: 9px;
  background-color: #444;
}
.zoom-value {
  width: 30px;
  text-align: right;
}
```
